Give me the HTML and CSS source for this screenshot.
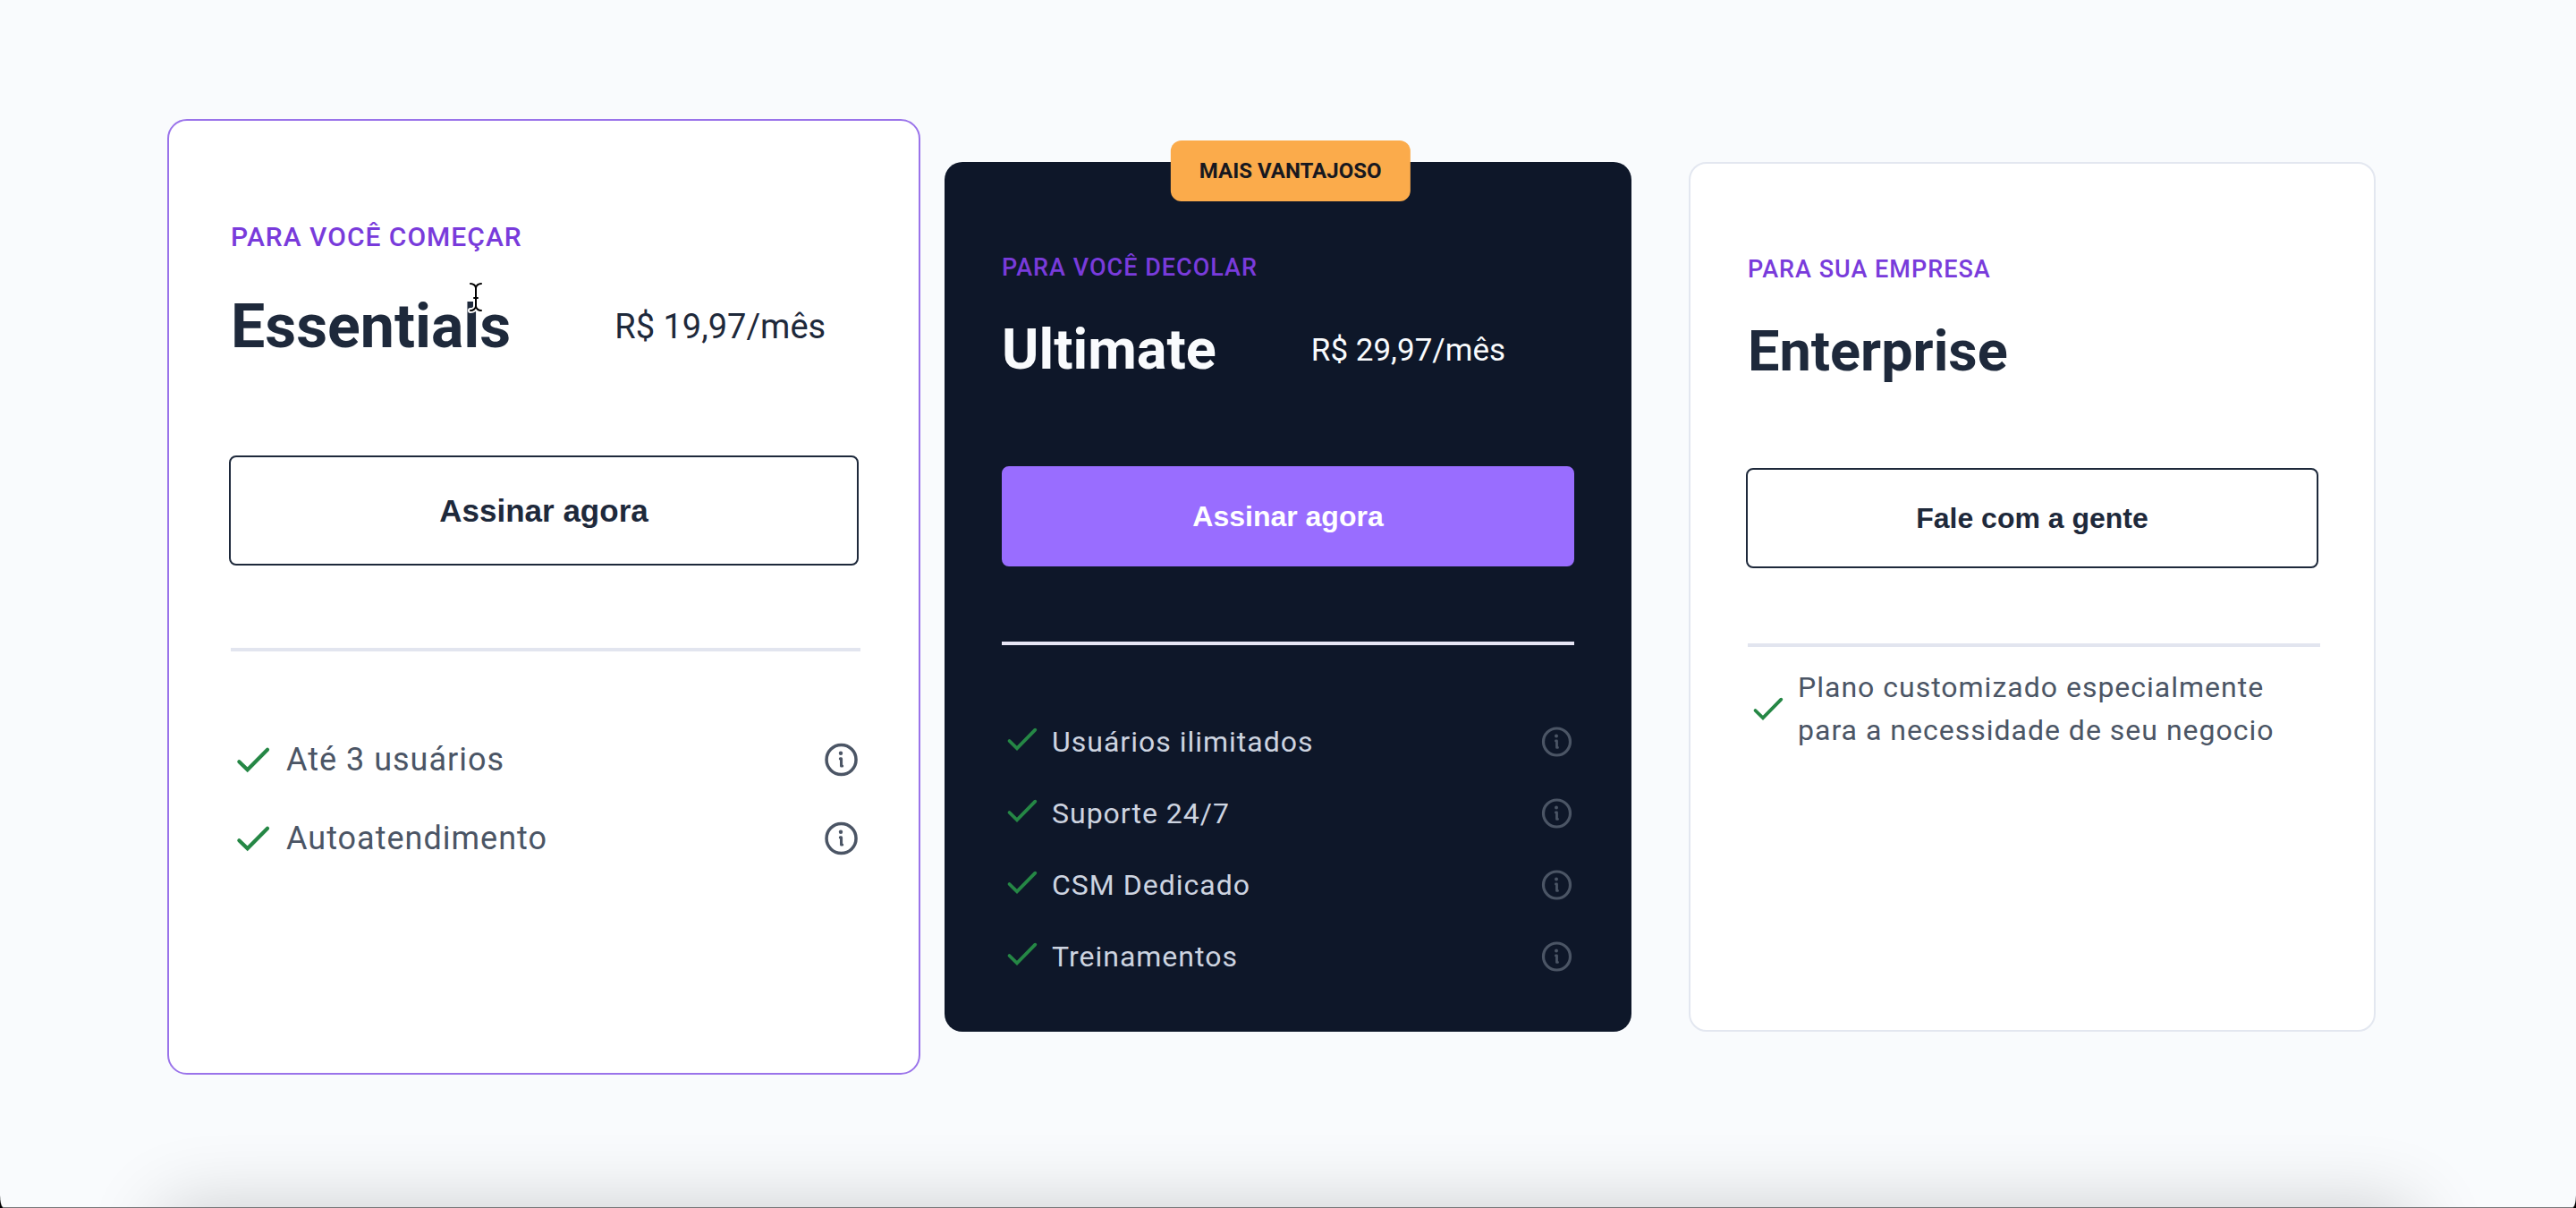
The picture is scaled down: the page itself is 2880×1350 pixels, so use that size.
FILE: index.html
```html
<!DOCTYPE html>
<html lang="pt-BR">
<head>
<meta charset="utf-8">
<meta name="viewport" content="width=device-width, initial-scale=1">
<title>Planos</title>
<link rel="stylesheet" href="styles.css">
</head>
<body>
<svg class="sprite" aria-hidden="true">
  <symbol id="check" viewBox="0 0 40 40">
    <path d="M8.5 22 17 30.3 37.3 9.7" fill="none" stroke="#258745" stroke-width="3.8" stroke-linecap="round" stroke-linejoin="miter"/>
  </symbol>
  <symbol id="info" viewBox="0 0 40 40">
    <circle cx="20.5" cy="20" r="15" fill="none" stroke="currentColor" stroke-width="3.2"/>
    <circle cx="20" cy="13.4" r="2" fill="currentColor"/>
    <path d="M19.4 19h1.1v7.4h1" fill="none" stroke="currentColor" stroke-width="2.8" stroke-linecap="round" stroke-linejoin="round"/>
  </symbol>
</svg>
<main class="page">
  <div class="plans">
    <section class="plan plan--active">
      <p class="plan__label">PARA VOCÊ COMEÇAR</p>
      <div class="plan__head">
        <h2 class="plan__name">Essentials</h2>
        <p class="plan__price">R$ 19,97/mês</p>
        <svg class="cursor" viewBox="0 0 18 36" aria-hidden="true">
          <g fill="none" stroke-linecap="round" stroke-linejoin="round">
            <path class="cursor__halo" d="M3 3C6 3 9 5 9 8C9 5 12 3 15 3M9 8v20M3 33c3 0 6-2 6-5c0 3 3 5 6 5M7 19h4"/>
            <path class="cursor__line" d="M3 3C6 3 9 5 9 8C9 5 12 3 15 3M9 8v20M3 33c3 0 6-2 6-5c0 3 3 5 6 5M7 19h4"/>
          </g>
        </svg>
      </div>
      <button class="plan__cta" type="button">Assinar agora</button>
      <hr class="plan__rule">
      <ul class="features">
        <li class="feature"><svg class="check" aria-hidden="true"><use href="#check"/></svg><span class="feature__text">Até 3 usuários</span><button class="info" type="button" aria-label="Mais informações"><svg class="info__icon"><use href="#info"/></svg></button></li>
        <li class="feature"><svg class="check" aria-hidden="true"><use href="#check"/></svg><span class="feature__text">Autoatendimento</span><button class="info" type="button" aria-label="Mais informações"><svg class="info__icon"><use href="#info"/></svg></button></li>
      </ul>
    </section>

    <section class="plan plan--dark">
      <span class="badge">MAIS VANTAJOSO</span>
      <p class="plan__label">PARA VOCÊ DECOLAR</p>
      <div class="plan__head">
        <h2 class="plan__name">Ultimate</h2>
        <p class="plan__price">R$ 29,97/mês</p>
      </div>
      <button class="plan__cta" type="button">Assinar agora</button>
      <hr class="plan__rule">
      <ul class="features">
        <li class="feature"><svg class="check" aria-hidden="true"><use href="#check"/></svg><span class="feature__text">Usuários ilimitados</span><button class="info" type="button" aria-label="Mais informações"><svg class="info__icon"><use href="#info"/></svg></button></li>
        <li class="feature"><svg class="check" aria-hidden="true"><use href="#check"/></svg><span class="feature__text">Suporte 24/7</span><button class="info" type="button" aria-label="Mais informações"><svg class="info__icon"><use href="#info"/></svg></button></li>
        <li class="feature"><svg class="check" aria-hidden="true"><use href="#check"/></svg><span class="feature__text">CSM Dedicado</span><button class="info" type="button" aria-label="Mais informações"><svg class="info__icon"><use href="#info"/></svg></button></li>
        <li class="feature"><svg class="check" aria-hidden="true"><use href="#check"/></svg><span class="feature__text">Treinamentos</span><button class="info" type="button" aria-label="Mais informações"><svg class="info__icon"><use href="#info"/></svg></button></li>
      </ul>
    </section>

    <section class="plan plan--custom">
      <p class="plan__label">PARA SUA EMPRESA</p>
      <div class="plan__head">
        <h2 class="plan__name">Enterprise</h2>
      </div>
      <button class="plan__cta" type="button">Fale com a gente</button>
      <hr class="plan__rule">
      <ul class="features">
        <li class="feature"><svg class="check" aria-hidden="true"><use href="#check"/></svg><span class="feature__text">Plano customizado especialmente<br>para a necessidade de seu negocio</span></li>
      </ul>
    </section>
  </div>
  <div class="dock-shadow" aria-hidden="true"></div>
</main>
</body>
</html>
```
FILE: styles.css
```css
*,
*::before,
*::after {
  box-sizing: border-box;
}

body {
  margin: 0;
  background: #000;
  font-family: Roboto, "Liberation Sans", sans-serif;
  color: #1e293b;
}

p,
h2,
ul {
  margin: 0;
  padding: 0;
}

.sprite {
  position: absolute;
  width: 0;
  height: 0;
}

.page {
  position: relative;
  min-height: 100vh;
  padding: 181px 64px;
  overflow: hidden;
  background: #f9fbfd;
  border-bottom: 1px solid #77787a;
  border-radius: 0 0 4px 4px / 0 0 14px 14px;
}

.plans {
  display: grid;
  grid-template-columns: repeat(3, minmax(0, 768px));
  gap: 64px;
  justify-content: center;
}

.plan {
  --label: 27px;
  --label-line: 40px;
  --name: 63px;
  --name-line: 80px;
  --price: 35px;
  --cta: 32px;
  --cta-height: 112px;
  --item: 32px;
  --icon: 40px;
  --item-gap: 40px;
  position: relative;
  display: flex;
  flex-direction: column;
  padding: 98px 64px 64px;
  background: #fff;
  border-radius: 20px;
}

.plan__label {
  margin-bottom: 32px;
  font-size: var(--label);
  font-weight: 500;
  line-height: var(--label-line);
  letter-spacing: 1px;
  color: #793bdb;
}

.plan__head {
  position: relative;
  display: flex;
  align-items: center;
  gap: 106px;
  margin-bottom: 90px;
}

.plan__name {
  font-size: var(--name);
  font-weight: 700;
  line-height: var(--name-line);
}

.plan__price {
  font-size: var(--price);
}

.plan__cta {
  height: var(--cta-height);
  padding: 0;
  font-family: "Liberation Sans", Arial, sans-serif;
  font-size: var(--cta);
  font-weight: 700;
  color: #1e293b;
  background: #fff;
  border: 2px solid #1e293b;
  border-radius: 8px;
}

.plan__rule {
  width: 100%;
  height: 4px;
  margin: 84px 0 88px;
  background: #e2e5ef;
  border: 0;
}

.features {
  display: flex;
  flex-direction: column;
  gap: var(--item-gap);
  list-style: none;
}

.feature {
  display: flex;
  align-items: center;
  gap: 16px;
}

.feature__text {
  flex: 1;
  font-size: var(--item);
  line-height: var(--icon);
  letter-spacing: 1px;
  color: #4b5565;
}

.check,
.info,
.info__icon {
  display: block;
  flex: none;
  width: var(--icon);
  height: var(--icon);
}

.info {
  padding: 0;
  color: #4b5565;
  background: none;
  border: 0;
}

/* Outlined buttons hang over the text column by their border */
.plan--active .plan__cta,
.plan--custom .plan__cta {
  margin: 0 2px 0 -2px;
}

/* Enlarged plan under the pointer */
.plan--active {
  --label: 30px;
  --label-line: 44px;
  --name: 68px;
  --name-line: 88px;
  --price: 38px;
  --cta: 35px;
  --cta-height: 123px;
  --item: 36px;
  --icon: 44px;
  --item-gap: 44px;
  margin: -48px -37px;
  padding: 108px 65px 64px 69px;
  border: 2px solid #9a73ea;
  border-radius: 22px;
}

.plan--active .plan__label {
  margin-bottom: 34px;
}

.plan--active .plan__head {
  gap: 116px;
  margin-bottom: 100px;
}

.plan--active .plan__rule {
  margin: 92px 0 99px;
}

.plan--active .feature {
  gap: 18px;
}

.plan--dark {
  color: #f9fbfd;
  background: #0e1729;
}

.plan--dark .plan__cta {
  color: #fff;
  background: #996dff;
  border-color: #996dff;
}

.plan--dark .plan__rule {
  background: #e6e5f4;
}

.plan--dark .feature__text {
  color: #cdd4e0;
}

.plan--dark .check {
  margin: -3px 0 3px;
}

.plan--custom {
  padding: 98px 60px 62px 64px;
  border: 2px solid #e3e7f0;
}

.plan--custom .plan__rule {
  margin-bottom: 21px;
}

.plan--custom .feature__text {
  line-height: 48px;
}

.badge {
  position: absolute;
  top: 0;
  left: 50%;
  padding: 0 32px;
  font-size: 24px;
  font-weight: 700;
  line-height: 68px;
  white-space: nowrap;
  color: #18181f;
  background: #fbab4b;
  border-radius: 12px;
  transform: translate(-49%, -24px);
}

.cursor {
  position: absolute;
  top: -7px;
  left: 265px;
  width: 18px;
  height: 36px;
  overflow: visible;
}

.cursor__halo {
  stroke: #fff;
  stroke-width: 6;
}

.cursor__line {
  stroke: #000;
  stroke-width: 2;
}

.dock-shadow {
  position: absolute;
  right: 180px;
  bottom: -200px;
  left: 180px;
  height: 200px;
  border-radius: 24px;
  box-shadow: 0 0 84px rgba(0, 0, 0, 0.19);
}
```
